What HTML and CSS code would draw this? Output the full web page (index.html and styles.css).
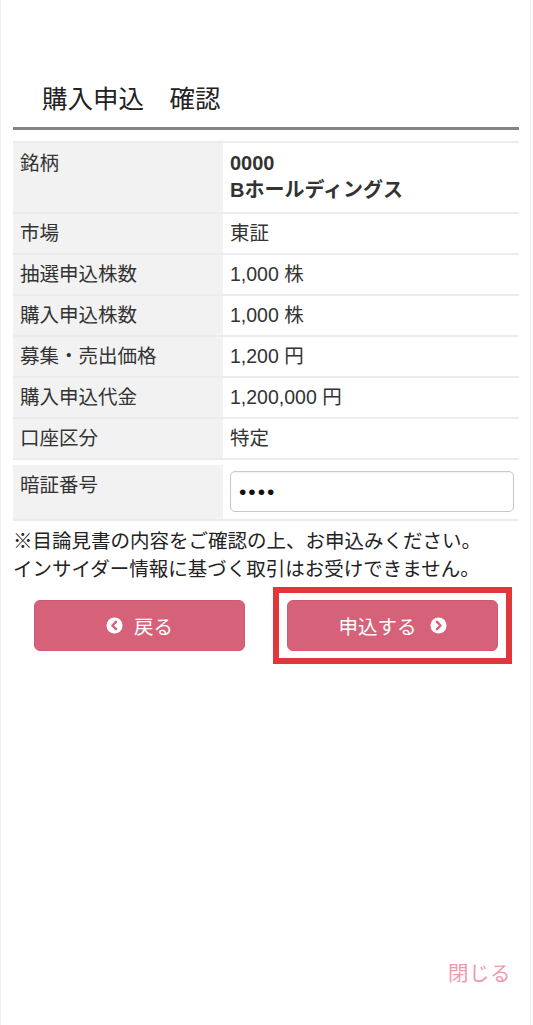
FILE: index.html
```html
<!DOCTYPE html>
<html lang="ja">
<head>
    <meta charset="UTF-8">
    <meta name="viewport" content="width=device-width, initial-scale=1.0">
    <title>購入申込 確認</title>
    <link rel="stylesheet" href="styles.css">
</head>
<body>
    <div class="page">
        <h1 class="title">購入申込　確認</h1>

        <table class="info">
            <tr>
                <th class="top">銘柄</th>
                <td class="strong">0000<br>Bホールディングス</td>
            </tr>
            <tr>
                <th>市場</th>
                <td>東証</td>
            </tr>
            <tr>
                <th>抽選申込株数</th>
                <td>1,000 株</td>
            </tr>
            <tr>
                <th>購入申込株数</th>
                <td>1,000 株</td>
            </tr>
            <tr>
                <th>募集・売出価格</th>
                <td>1,200 円</td>
            </tr>
            <tr>
                <th>購入申込代金</th>
                <td>1,200,000 円</td>
            </tr>
            <tr>
                <th>口座区分</th>
                <td>特定</td>
            </tr>
        </table>

        <table class="info pin">
            <tr>
                <th class="top">暗証番号</th>
                <td><input class="pin-input" type="password" value="1234"></td>
            </tr>
        </table>

        <p class="note">※目論見書の内容をご確認の上、お申込みください。<br>インサイダー情報に基づく取引はお受けできません。</p>

        <div class="actions">
            <button class="btn">
                <svg class="icon" viewBox="0 0 18 18"><circle cx="9" cy="9" r="8.5" fill="#fff"/><path d="M10.6 5.2 6.8 9l3.8 3.8" fill="none" stroke="#d6627a" stroke-width="2.6" stroke-linecap="round" stroke-linejoin="round"/></svg>
                戻る
            </button>
            <div class="highlight">
                <button class="btn btn-next">
                    申込する
                    <svg class="icon" viewBox="0 0 18 18"><circle cx="9" cy="9" r="8.5" fill="#fff"/><path d="M7.4 5.2 11.2 9l-3.8 3.8" fill="none" stroke="#d6627a" stroke-width="2.6" stroke-linecap="round" stroke-linejoin="round"/></svg>
                </button>
            </div>
        </div>

        <div class="footer">
            <a class="close" href="#">閉じる</a>
        </div>
    </div>
</body>
</html>
```

FILE: styles.css
```css
* {
    margin: 0;
    padding: 0;
    box-sizing: border-box;
}

body {
    background: #fff;
    color: #333;
    font-family: "Liberation Sans", "Noto Sans CJK JP", sans-serif;
}

.page {
    width: 531px;
    min-height: 1025px;
    border-left: 1px solid #efefef;
    border-right: 1px solid #efefef;
    padding: 80px 11px 0 12px;
    display: flex;
    flex-direction: column;
}

.title {
    font-size: 25.5px;
    font-weight: 400;
    line-height: 38px;
    padding-left: 29px;
    color: #222;
    border-bottom: 3px solid #858585;
    padding-bottom: 9px;
    margin-bottom: 11px;
}

.info {
    width: 100%;
    border-collapse: collapse;
}

.info th,
.info td {
    font-size: 19.5px;
    font-weight: 400;
    text-align: left;
    line-height: 27px;
    height: 41px;
    border-top: 2px solid #ececec;
    border-bottom: 2px solid #ececec;
    vertical-align: middle;
}

.info th {
    width: 210px;
    background: #f2f2f2;
    padding: 5px 7px;
}

.info td {
    padding: 5px 7px;
}

.info th.top,
.info th.top + td {
    vertical-align: top;
    padding-top: 7px;
}

.info td.strong {
    font-weight: 700;
    font-size: 20px;
    padding-bottom: 8px;
}

.pin {
    margin-top: 5px;
}

.pin th,
.pin td {
    border-top: none;
    height: 55px;
}

.pin td {
    padding: 6px 5px 6px 7px !important;
}

.pin-input {
    width: 100%;
    height: 41px;
    border: 1px solid #c8c8c8;
    border-radius: 5px;
    padding: 0 8px;
    font-size: 21px;
    color: #111;
    box-shadow: inset 0 1px 2px rgba(0, 0, 0, 0.06);
    font-family: "Liberation Sans", sans-serif;
    letter-spacing: 2px;
}

.note {
    font-size: 19.5px;
    line-height: 28px;
    color: #222;
    margin-top: 6px;
}

.actions {
    display: grid;
    grid-template-columns: 1fr 1fr;
    justify-items: center;
    align-items: center;
    margin-top: 4px;
}

.btn {
    width: 211px;
    height: 51px;
    background: #d6627a;
    border: 1px solid #cf5a73;
    border-radius: 6px;
    color: #fff;
    font-family: "Liberation Sans", "Noto Sans CJK JP", sans-serif;
    font-size: 19.5px;
    display: flex;
    align-items: center;
    justify-content: center;
    gap: 11px;
}

.btn-next {
    gap: 13px;
}

.icon {
    width: 17px;
    height: 17px;
}

.highlight {
    border: 6px solid #e0383a;
    padding: 7px 8px;
    background: #fff;
}

.footer {
    margin-top: auto;
    text-align: right;
    padding: 0 8px 38px 0;
}

.close {
    color: #ef9aad;
    font-size: 20.5px;
    text-decoration: none;
    letter-spacing: 0.5px;
}
```
